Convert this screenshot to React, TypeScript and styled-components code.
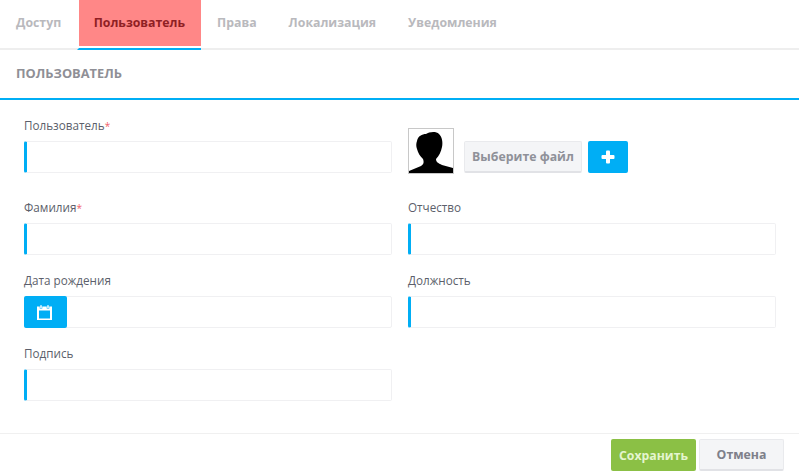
import React from "react";
import styled, { createGlobalStyle } from "styled-components";

const GlobalStyle = createGlobalStyle`
  html, body {
    margin: 0;
    padding: 0;
    background: #fff;
    font-family: "Open Sans", "Liberation Sans", sans-serif;
  }
`;

const tabs = ["Доступ", "Пользователь", "Права", "Локализация", "Уведомления"];

const CalendarIcon = () => (
  <svg width="15" height="15" viewBox="0 0 15 15" fill="none">
    <rect x="0" y="1.5" width="15" height="13.5" fill="#fff" />
    <rect x="2" y="5.5" width="11" height="8" fill="#00aef5" />
    <rect x="3" y="0" width="2" height="3.5" fill="#fff" stroke="#00aef5" strokeWidth="0.5" />
    <rect x="10" y="0" width="2" height="3.5" fill="#fff" stroke="#00aef5" strokeWidth="0.5" />
  </svg>
);

const PlusIcon = () => (
  <svg width="14" height="14" viewBox="0 0 14 14">
    <rect x="5" y="0.5" width="4" height="13" rx="1" fill="#fff" />
    <rect x="0.5" y="5" width="13" height="4" rx="1" fill="#fff" />
  </svg>
);

const Silhouette = () => (
  <svg width="44" height="44" viewBox="0 0 44 44">
    <rect width="44" height="44" fill="#fff" />
    <path
      d="M8 12 C9 7 13 5 17 5 C20 3 27 2 30 5 C33 8 34 13 33 18 C32 23 30 27 27 30 C27 33 29 34 33 36 L44 39 L44 44 L0 44 L0 42 L12 37 C15 35 15 33 14 30 C11 27 9 24 8 20 C7 17 7 15 8 12 Z"
      fill="#000"
    />
  </svg>
);

export default function App() {
  return (
    <>
      <GlobalStyle />
      <Page>
        <TabBar>
          {tabs.map((tab) => (
            <Tab key={tab} $active={tab === "Пользователь"}>
              {tab}
            </Tab>
          ))}
        </TabBar>
        <SectionHeader>Пользователь</SectionHeader>
        <Form>
          <TopRow>
            <Field>
              <Label>
                Пользователь<Required>*</Required>
              </Label>
              <TextInput />
            </Field>
            <AvatarArea>
              <AvatarFrame>
                <Silhouette />
              </AvatarFrame>
              <FileButton>Выберите файл</FileButton>
              <AddButton>
                <PlusIcon />
              </AddButton>
            </AvatarArea>
          </TopRow>
          <FormRow>
            <Field>
              <Label>
                Фамилия<Required>*</Required>
              </Label>
              <TextInput />
            </Field>
            <Field>
              <Label>Отчество</Label>
              <TextInput />
            </Field>
          </FormRow>
          <FormRow>
            <Field>
              <Label>Дата рождения</Label>
              <DateGroup>
                <DateButton>
                  <CalendarIcon />
                </DateButton>
              </DateGroup>
            </Field>
            <Field>
              <Label>Должность</Label>
              <TextInput />
            </Field>
          </FormRow>
          <FormRow>
            <Field>
              <Label>Подпись</Label>
              <TextInput />
            </Field>
          </FormRow>
        </Form>
        <Footer>
          <SaveButton>Сохранить</SaveButton>
          <CancelButton>Отмена</CancelButton>
        </Footer>
      </Page>
    </>
  );
}

const Page = styled.div`
  width: 799px;
  height: 476px;
  overflow: hidden;
  display: flex;
  flex-direction: column;
  background: #fff;
`;
const TabBar = styled.div`
  display: flex;
  height: 50px;
  box-sizing: border-box;
  border-bottom: 2px solid #eeeeee;
`;
const Tab = styled.div<{ $active?: boolean }>`
  height: 50px;
  box-sizing: border-box;
  padding: 0 16px 4px ${(p) => (p.$active ? "15px" : "16px")};
  display: flex;
  align-items: center;
  font-size: 12.3px;
  font-weight: 700;
  color: ${(p) => (p.$active ? "#8f1f24" : "#b9b9bd")};
  background: ${(p) => (p.$active ? "linear-gradient(#ff8787 46px, #fff 46px)" : "none")};
  background-clip: padding-box;
  border-left: ${(p) => (p.$active ? "2px" : "1px")} solid transparent;
  margin-left: -1px;
  border-bottom: 2px solid ${(p) => (p.$active ? "#00aef5" : "transparent")};

  &:first-child {
    padding-right: 16.5px;
    margin-left: 0;
    border-left: 0;
  }
`;
const SectionHeader = styled.div`
  height: 50px;
  box-sizing: border-box;
  padding: 0 16px 2px;
  display: flex;
  align-items: center;
  border-bottom: 2px solid #00aef5;
  font-size: 12.85px;
  font-weight: 700;
  text-transform: uppercase;
  color: #8f8f96;
`;
const Form = styled.div`
  flex: 1;
  padding: 17px 23px 0 24px;
`;
const FormRow = styled.div`
  display: grid;
  grid-template-columns: 368px 368px;
  column-gap: 16px;
  margin-bottom: 17px;
`;
const TopRow = styled(FormRow)`
  margin-bottom: 25px;
`;
const Field = styled.div`
  display: flex;
  flex-direction: column;
`;
const Label = styled.label`
  height: 24px;
  font-size: 11.7px;
  line-height: 16px;
  color: #5c5f6b;
`;
const Required = styled.span`
  color: #f0616a;
  font-size: 10px;
`;
const TextInput = styled.input`
  width: 368px;
  height: 32px;
  box-sizing: border-box;
  padding: 0 8px;
  border: 1px solid #f0f0f2;
  border-left: 3px solid #00aef5;
  border-radius: 2px;
  background: #fff;
  outline: none;
`;
const DateGroup = styled.div`
  width: 368px;
  height: 32px;
  box-sizing: border-box;
  border: 1px solid #f0f0f2;
  border-radius: 2px;
  display: flex;
`;
const DateButton = styled.div`
  width: 43px;
  height: 32px;
  margin: -1px 0 0 -1px;
  padding-right: 2px;
  box-sizing: border-box;
  border-radius: 2px;
  background: #00aef5;
  display: flex;
  align-items: center;
  justify-content: center;
`;
const AvatarArea = styled.div`
  display: flex;
  align-items: flex-end;
  padding-top: 11px;
`;
const AvatarFrame = styled.div`
  width: 46px;
  height: 46px;
  box-sizing: border-box;
  border: 1px solid #c8c8c8;
  margin: 0 10px 0 0;
  display: flex;
  overflow: hidden;
`;
const BaseButton = styled.div`
  height: 32px;
  box-sizing: border-box;
  display: flex;
  align-items: center;
  justify-content: center;
  border-radius: 2px;
  font-size: 12.3px;
  font-weight: 700;
`;
const FileButton = styled(BaseButton)`
  width: 118px;
  margin: 0 6px 1px 0;
  background: #f4f5f7;
  border: 1px solid #e9eaed;
  border-bottom: 2px solid #e1e2e6;
  color: #8f9199;
`;
const AddButton = styled(BaseButton)`
  width: 40px;
  margin-bottom: 1px;
  background: #00aef5;
`;
const Footer = styled.div`
  height: 43px;
  box-sizing: border-box;
  border-top: 1px solid #f0f0f0;
  padding: 5px 15px 0 0;
  display: flex;
  justify-content: flex-end;
  gap: 3px;
`;
const SaveButton = styled(BaseButton)`
  width: 85px;
  background: #8bc045;
  color: #e4f5cf;
`;
const CancelButton = styled(BaseButton)`
  width: 85px;
  background: #f4f5f7;
  border: 1px solid #e9eaed;
  border-bottom: 2px solid #e1e2e6;
  color: #7e808a;
`;
